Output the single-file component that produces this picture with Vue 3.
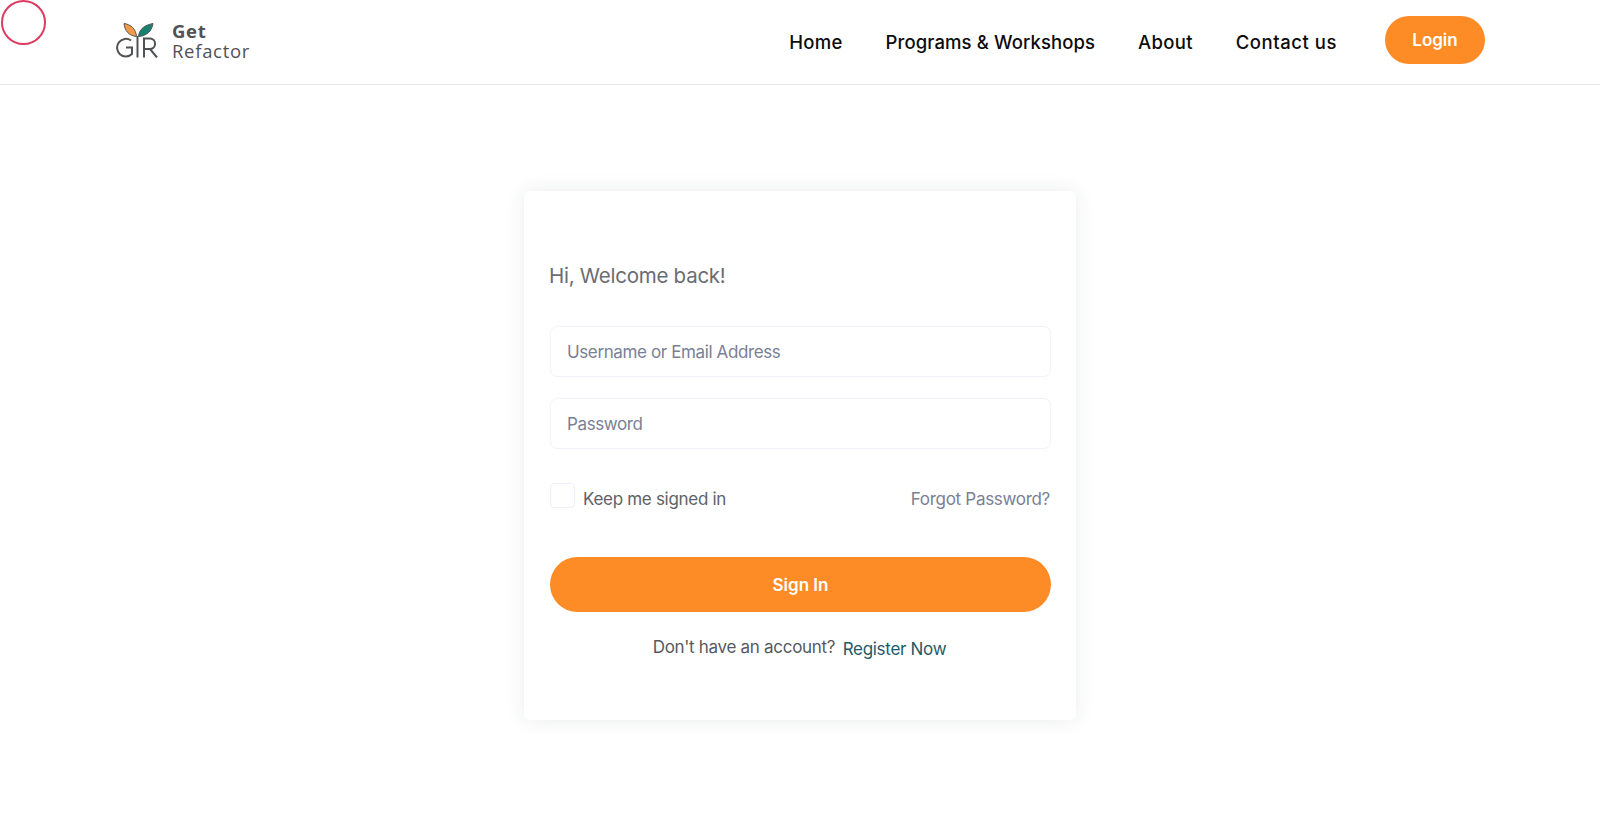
<script setup>
const links = ['Home', 'Programs & Workshops', 'About', 'Contact us']
</script>

<template>
  <div class="page">
    <span class="cursor"></span>
    <header class="header">
      <a class="brand">
        <svg class="mark" viewBox="0 0 42 36" width="42" height="36" aria-hidden="true">
          <path d="M20.500 14.500C20 7 15 2.500 8 1.500C8.500 9 13.500 14 20.500 14.500Z" fill="#f29a45" stroke="#55585a" stroke-width="1"/>
          <path d="M22.500 14.500C23 7 29 3 37 1.500C36 9.500 30 14 22.500 14.500Z" fill="#17806f" stroke="#55585a" stroke-width="1"/>
          <path d="M15 18.500A8.800 8.800 0 1 0 16 32V25.500H10" fill="none" stroke="#505356" stroke-width="2"/>
          <path d="M21.500 14V35.500" fill="none" stroke="#505356" stroke-width="2"/>
          <path d="M28 35.500V16.500H34.500A5.300 5.300 0 0 1 34.500 27H28M34 27L41 35.500" fill="none" stroke="#505356" stroke-width="2"/>
        </svg>
        <span class="brand-text"><b>Get</b><span>Refactor</span></span>
      </a>
      <nav class="nav">
        <a v-for="link in links" :key="link">{{ link }}</a>
        <button class="login" type="button">Login</button>
      </nav>
    </header>

    <main class="main">
      <form class="card" @submit.prevent>
        <h1 class="title">Hi, Welcome back!</h1>
        <input class="field" type="text" placeholder="Username or Email Address" />
        <input class="field" type="password" placeholder="Password" />
        <div class="options">
          <label class="keep"><span class="box"></span><span class="opt-text">Keep me signed in</span></label>
          <a class="forgot opt-text">Forgot Password?</a>
        </div>
        <button class="signin" type="submit">Sign In</button>
        <p class="register">Don't have an account? <a>Register Now</a></p>
      </form>
    </main>
  </div>
</template>

<style>
html, body { margin: 0; background: #fff; }
</style>

<style scoped>
.page {
  position: relative;
  min-height: 822px;
  font-family: Inter, "Noto Sans", sans-serif;
  background: #fff;
}
.cursor {
  position: absolute;
  left: 1px;
  top: 0;
  width: 45px;
  height: 45px;
  box-sizing: border-box;
  border: 2px solid #dc3b62;
  border-radius: 50%;
}
.header {
  box-sizing: border-box;
  height: 85px;
  border-bottom: 1px solid #e9eaec;
  padding: 0 115px 0 116px;
  display: flex;
  align-items: center;
  justify-content: space-between;
}
.brand { display: flex; align-items: center; gap: 14px; }
.mark { display: block; margin-bottom: 4px; }
.brand-text {
  display: flex;
  flex-direction: column;
  font-family: "Open Sans", sans-serif;
  font-size: 18.500px;
  line-height: 20px;
  letter-spacing: 0.7px;
  color: #505356;
  margin-bottom: 2px;
}
.brand-text b { font-weight: 700; }
.nav { display: flex; align-items: center; color: #0c0c0c; font-size: 18.500px; font-weight: 500; letter-spacing: 0.1px; }
.nav a { margin-right: 43px; }
.nav a:nth-child(1) { letter-spacing: 0.3px; }
.nav a:nth-child(3) { letter-spacing: 0.3px; }
.nav a:nth-child(4) { margin-right: 48px; letter-spacing: 0.55px; }
.login {
  width: 100px;
  height: 48px;
  border: 0;
  border-radius: 24px;
  background: #fd8c27;
  color: #fff;
  font: 600 17px Inter, sans-serif;
  margin-top: -4px;
}
.main { display: flex; justify-content: center; padding-top: 106px; }
.card {
  box-sizing: border-box;
  width: 552px;
  height: 529px;
  padding: 70px 25px 0 26px;
  border-radius: 6px;
  background: #fff;
  box-shadow: 0 0 20px rgba(30, 40, 60, 0.09);
  display: flex;
  flex-direction: column;
}
.title {
  margin: 0 0 35px -1px;
  font-size: 20.500px;
  line-height: 30px;
  font-weight: 400;
  color: #6a6d72;
  letter-spacing: -0.25px;
}
.field {
  box-sizing: border-box;
  width: 100%;
  height: 51px;
  flex: none;
  padding: 0 16px;
  margin-bottom: 21px;
  border: 1px solid #f1f3fb;
  border-radius: 7px;
  font: 400 17px Inter, sans-serif;
  letter-spacing: -0.38px;
  outline: none;
}
.field::placeholder { color: #7a8095; opacity: 1; }
.options {
  display: flex;
  align-items: flex-start;
  justify-content: space-between;
  margin-top: 13px;
  font-size: 17px;
  letter-spacing: -0.3px;
}
.opt-text { display: block; padding-top: 4px; line-height: 25px; }
.keep { display: flex; align-items: flex-start; gap: 8px; color: #5f6266; }
.box {
  box-sizing: border-box;
  width: 25px;
  height: 25px;
  border: 1px solid #eef1fb;
  border-radius: 4px;
}
.forgot { color: #7a8095; margin-right: 1px; }
.signin {
  height: 55px;
  flex: none;
  margin-top: 45px;
  border: 0;
  border-radius: 28px;
  background: #fd8c27;
  color: #fff;
  font: 600 17px Inter, sans-serif;
}
.register {
  margin: 25px 2px 0 0;
  text-align: center;
  font-size: 17px;
  line-height: 20px;
  letter-spacing: -0.3px;
  color: #55595f;
}
.register a { color: #1f5a68; margin-left: 3px; position: relative; top: 2px; }
</style>
